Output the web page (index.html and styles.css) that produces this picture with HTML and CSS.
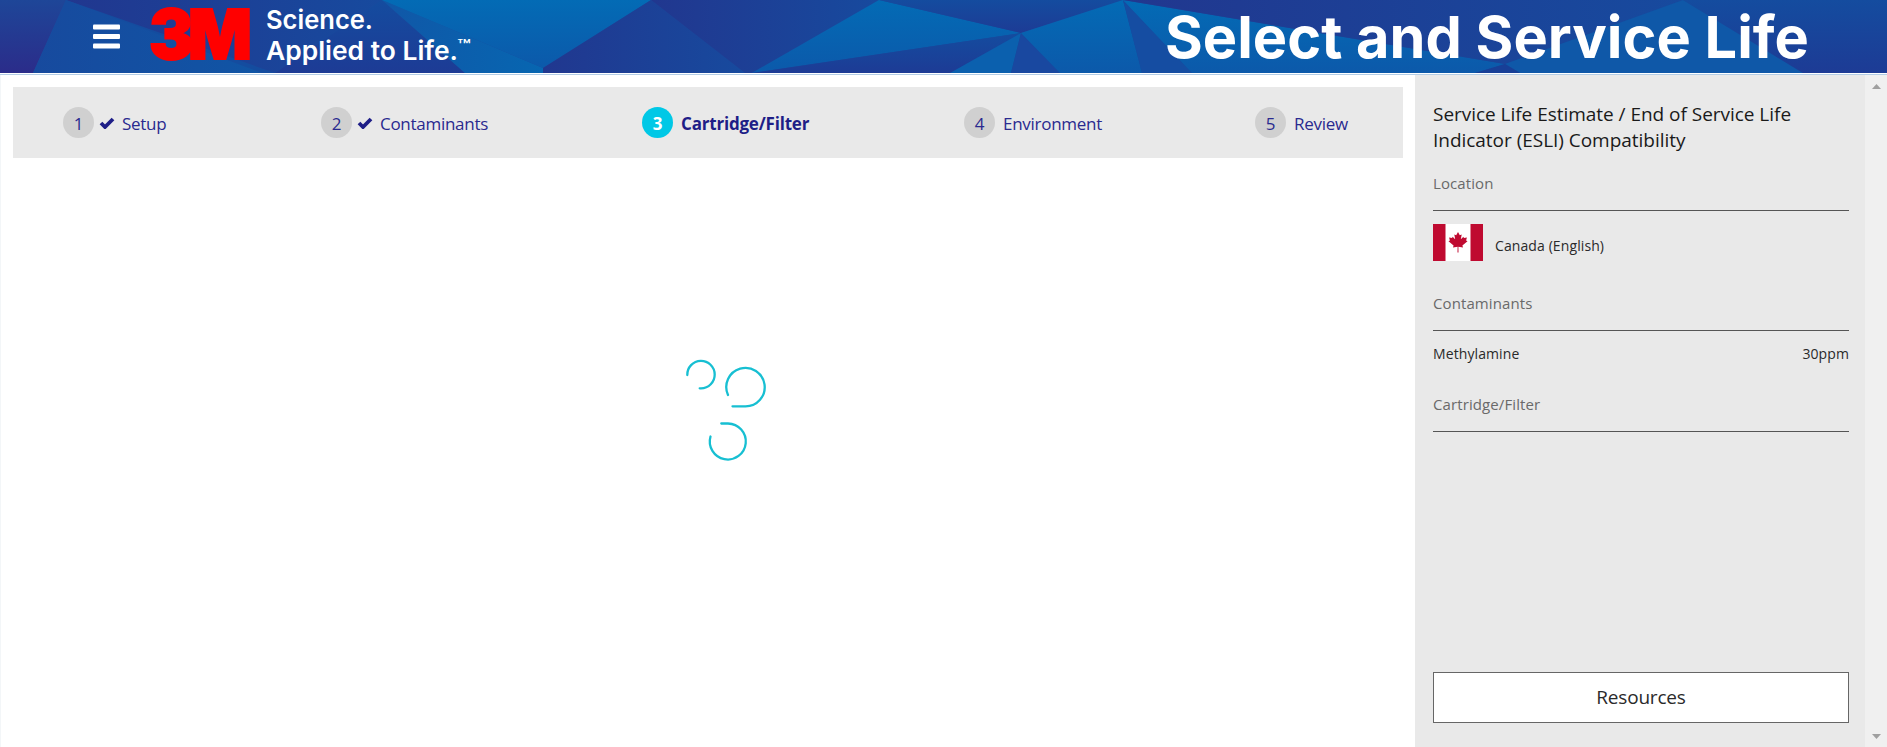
FILE: index.html
```html
<!DOCTYPE html>
<html lang="en">
<head>
<meta charset="utf-8">
<title>Select and Service Life</title>
<link rel="stylesheet" href="styles.css">
</head>
<body>
<div class="app">
<header class="banner">
<svg class="banner-art" viewBox="0 0 1887 73" width="1887" height="73">
<defs>
<linearGradient id="purple" x1="0" x2="1"><stop offset="0" stop-color="#21378f"/><stop offset="1" stop-color="#174a9e"/></linearGradient>
<linearGradient id="edge" x1="0" x2="0" y1="0" y2="1"><stop offset="0" stop-color="#1e4698"/><stop offset="1" stop-color="#2b2c8a"/></linearGradient>
<linearGradient id="mid" x1="0" x2="1"><stop offset="0" stop-color="#174a9e"/><stop offset="1" stop-color="#1055a5"/></linearGradient>
<linearGradient id="bright" x1="0" x2="0" y1="0" y2="1"><stop offset="0" stop-color="#036bb5"/><stop offset="1" stop-color="#0c59aa"/></linearGradient>
<linearGradient id="teal" x1="0" x2="1"><stop offset="0" stop-color="#1057a7"/><stop offset="1" stop-color="#0766b1"/></linearGradient>
<linearGradient id="low" x1="0" x2="0" y1="0" y2="1"><stop offset="0" stop-color="#144c9f"/><stop offset="1" stop-color="#1d3b95"/></linearGradient>
</defs>
<path fill="#144c9f" d="M0 0h1887v73H0z"/>
<path fill="url(#edge)" d="M0 0h66L33 73H0z"/>
<path fill="url(#purple)" d="M66 0H382L275 73z"/>
<path fill="url(#mid)" d="M66 0L262 73H33z"/>
<path fill="url(#low)" d="M382 0L465 73H275z"/>
<path fill="url(#teal)" d="M382 0L543 68V73H465z"/>
<path fill="url(#bright)" d="M382 0H651L543 68z"/>
<path fill="url(#purple)" d="M651 0L745 73H543V68z"/>
<path fill="url(#purple)" d="M651 0H879L752 73H745z"/>
<path fill="url(#bright)" d="M879 0L1021 33 752 73z"/>
<path fill="url(#low)" d="M1021 33L960 73H752z"/>
<path fill="#0b60ae" d="M1021 33L1011 73H950z"/>
<path fill="url(#low)" d="M879 0H1123L1021 33z"/>
<path fill="#1948a0" d="M1021 33L1060 73H1011z"/>
<path fill="url(#bright)" d="M1123 0L1142 73H1060L1021 33z"/>
<path fill="#154da2" d="M1123 0L1192 73H1142z"/>
<path fill="url(#bright)" d="M1123 0L1505 64 1475 73H1192z"/>
<path fill="url(#purple)" d="M1123 0H1683L1505 64z"/>
<path fill="#0f58a8" d="M1683 0L1803 73H1520L1505 64z"/>
<path fill="#183f97" d="M1505 64L1520 73H1475z"/>
<path fill="url(#low)" d="M1683 0H1887V73H1803z"/>
<g fill="#fff"><rect x="93" y="24.500" width="27" height="5" rx="1"/><rect x="93" y="34" width="27" height="5" rx="1"/><rect x="93" y="43.500" width="27" height="5" rx="1"/></g>
<text class="logo" x="149" y="59" textLength="97" lengthAdjust="spacingAndGlyphs">3M</text>
<text class="tag" x="266" y="29" textLength="107" lengthAdjust="spacingAndGlyphs">Science.</text>
<text class="tag" x="266" y="59.500" textLength="192" lengthAdjust="spacingAndGlyphs">Applied to Life.</text>
<text class="tm" x="457" y="51" textLength="14" lengthAdjust="spacingAndGlyphs">™</text>
<text class="title" x="1165" y="58" textLength="644" lengthAdjust="spacingAndGlyphs">Select and Service Life</text>
</svg>
</header>
<div class="body">
<main class="main">
<nav class="steps">
<div class="step setup"><span class="num">1</span><svg class="check" viewBox="0 0 16 12"><path d="M2 6l4 4 8-8"/></svg><span>Setup</span></div>
<div class="step contaminants"><span class="num">2</span><svg class="check" viewBox="0 0 16 12"><path d="M2 6l4 4 8-8"/></svg><span>Contaminants</span></div>
<div class="step cartridge active"><span class="num">3</span><span>Cartridge/Filter</span></div>
<div class="step environment"><span class="num">4</span><span>Environment</span></div>
<div class="step review"><span class="num">5</span><span>Review</span></div>
</nav>
<div class="loading">
<svg class="spinner" viewBox="0 0 110 125" width="110" height="125">
<path d="M17.300 29A13.700 13.700 0 1 1 31 42.300H29.700"/>
<path d="M58 49A19.200 19.200 0 1 1 75.500 60.300H62.500"/>
<path d="M40.500 90.500A18 18 0 1 0 58 77.500H51.300"/>
</svg>
</div>
</main>
<aside class="side">
<h1 class="heading">Service Life Estimate / End of Service Life<br>Indicator (ESLI) Compatibility</h1>
<h2 class="label">Location</h2>
<div class="country">
<svg class="flag" viewBox="0 0 50 37"><path fill="#fff" d="M0 0h50v37H0z"/><path fill="#bf0a30" d="M0 0h12.500v37H0zM37.500 0H50v37H37.500zM25 8l-1.800 3.300-1.900-.9.900 4.900-2.600-2.600-.5 1.300-3-.5.800 3-1.400.8 5.100 4.200-.6 1.900 4.600-.6-.1 5.700h1l-.1-5.700 4.600.6-.6-1.900 5.100-4.200-1.400-.8.800-3-3 .5-.5-1.300-2.600 2.600.9-4.900-1.900.9z"/></svg>
<span>Canada (English)</span>
</div>
<h2 class="label">Contaminants</h2>
<div class="row"><span>Methylamine</span><span>30ppm</span></div>
<h2 class="label">Cartridge/Filter</h2>
<button class="resources">Resources</button>
</aside>
<div class="scroll"><i class="up"></i><i class="down"></i></div>
</div>
</div>
</body>
</html>
```
FILE: styles.css
```css
* { box-sizing: border-box; }
body { margin: 0; background: #fff; font-family: "Open Sans", sans-serif; font-weight: 400; }
.app { height: 747px; display: flex; flex-direction: column; overflow: hidden; }
.banner { height: 75px; flex: none; border-bottom: 1px solid #b3cde6; }
.banner-art { display: block; overflow: visible; }
.banner-art text { fill: #fff; font-family: Inter, sans-serif; }
.banner-art .logo { fill: #f00; font-size: 69px; font-weight: 900; letter-spacing: -6px; stroke: #f00; stroke-width: 2px; }
.banner-art .tag { font-size: 26px; font-weight: 600; }
.banner-art .tm { font-size: 16px; font-weight: 600; }
.banner-art .title { font-size: 58px; font-weight: 700; }
.body { flex: 1; display: flex; min-height: 0; }
.main { width: 1415px; padding: 12px 12px 0; border-left: 1px solid #f3f6f8; display: flex; flex-direction: column; }
.steps { height: 71px; flex: none; padding: 0 55px 0 50px; background: #e9e9e9; display: flex; justify-content: space-between; align-items: center; }
.step { height: 31px; display: flex; align-items: center; font-size: 17px; color: #2a2a8f; white-space: nowrap; letter-spacing: -.28px; }
.step > span:last-child { line-height: 31px; padding-top: 1px; }
.num { width: 31px; height: 31px; border-radius: 50%; background: #d0d0d0; line-height: 33px; text-align: center; margin-right: 8px; flex: none; }
.check { width: 16px; height: 12px; margin: 0 7px 0 -3px; fill: none; stroke: #1e1e87; stroke-width: 3.800; flex: none; }
.setup { width: 103px; }
.contaminants { width: 166px; }
.cartridge { width: 167px; }
.environment { width: 136px; }
.review { width: 93px; }
.active { font-weight: 700; letter-spacing: -.2px; color: #1e1e87; }
.active .num { background: #00c8e6; color: #fff; }
.loading { flex: 1; display: flex; justify-content: center; align-items: flex-start; padding: 187.500px 0 0 33px; }
.spinner { fill: none; stroke: #17bfd2; stroke-width: 2.300; stroke-linecap: round; }
.side { width: 450px; padding: 26px 16px 24px 18px; background: #e9e9e9; display: flex; flex-direction: column; }
.heading { margin: 0; height: 67px; font-size: 19px; line-height: 26px; font-weight: 400; color: #1a1a1a; white-space: nowrap; letter-spacing: -.03px; }
.label { margin: 0; height: 43px; border-bottom: 1px solid #555; font-size: 15px; line-height: 30px; font-weight: 400; color: #6a6a6a; letter-spacing: .1px; }
.country { height: 77px; padding-top: 13px; display: flex; align-items: flex-start; gap: 12px; font-size: 14px; line-height: 43px; color: #2a2a2a; letter-spacing: .1px; }
.flag { width: 50px; height: 37px; }
.row { height: 58px; padding-top: 11px; display: flex; justify-content: space-between; font-size: 14px; line-height: 24px; color: #2a2a2a; letter-spacing: .1px; }
.resources { margin: auto 0 0; height: 51px; padding: 0; border: 1px solid #666; background: #fff; font: 400 19px/47px "Open Sans", sans-serif; letter-spacing: -.2px; color: #2a2a2a; }
.scroll { width: 22px; background: #f0f0f0; padding: 9px 6px 8px 7px; display: flex; flex-direction: column; justify-content: space-between; }
.up, .down { width: 9px; height: 5px; background: #a0a0a0; clip-path: polygon(50% 0, 100% 100%, 0 100%); }
.down { clip-path: polygon(0 0, 100% 0, 50% 100%); }
```
